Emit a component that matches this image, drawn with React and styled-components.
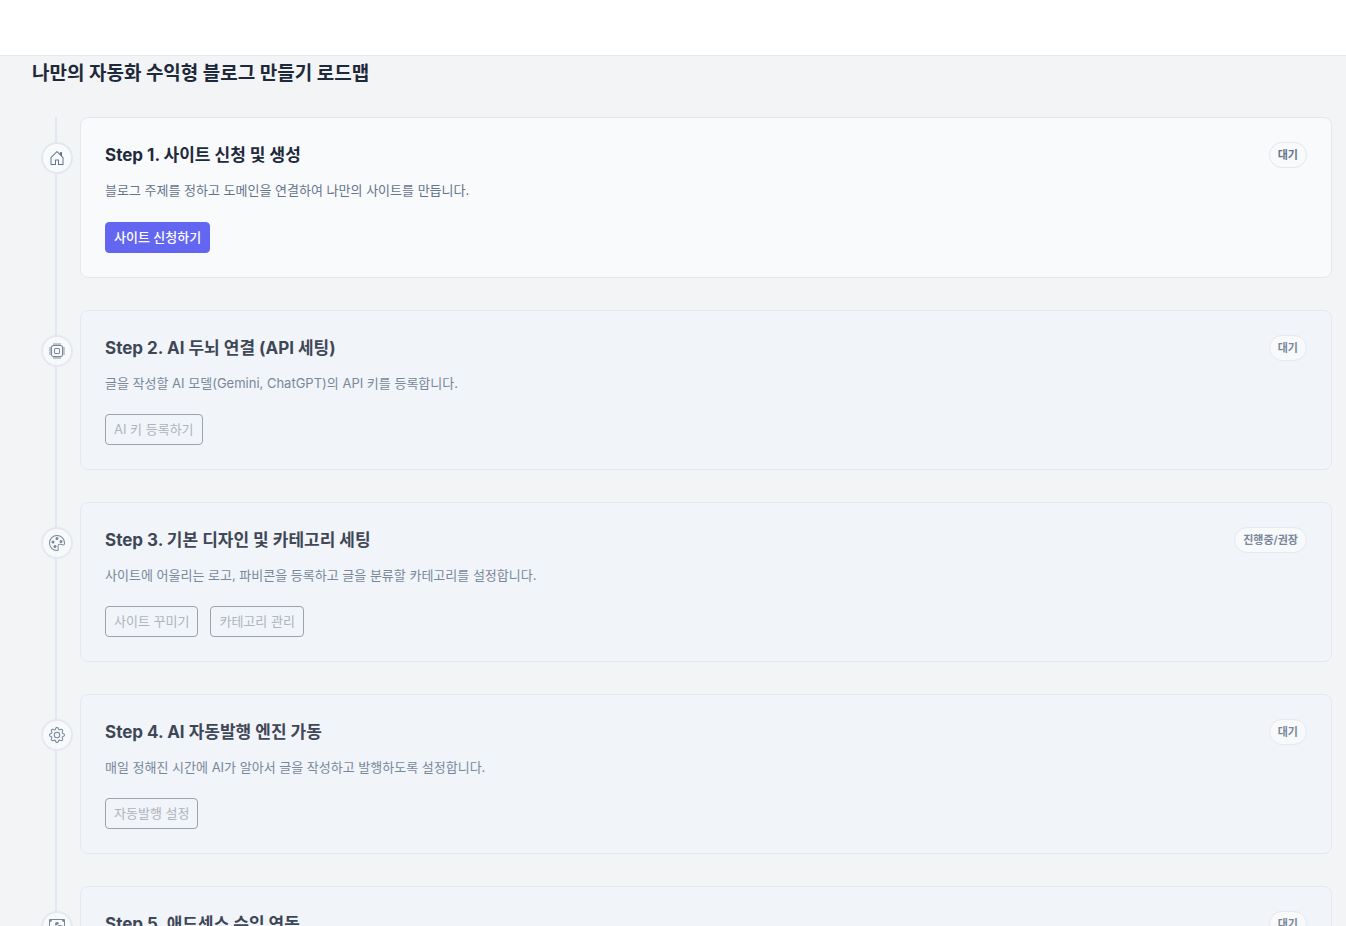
import React from 'react'
import { styled, createGlobalStyle } from 'styled-components'
import { BsHouseDoor, BsCpu, BsPalette, BsGear, BsCashCoin } from 'react-icons/bs'

const GlobalStyle = createGlobalStyle`
  * {
    box-sizing: border-box;
  }
  body {
    margin: 0;
    background: #f3f4f6;
    color: #1e293b;
    font-family: Inter, "Noto Sans CJK KR", sans-serif;
  }
`
const Page = styled.div`
  display: flex;
  flex-direction: column;
  height: 100vh;
`
const TopBar = styled.header`
  flex: none;
  height: 56px;
  background: #fff;
  border-bottom: 1px solid #e2e8f0;
`
const Content = styled.main`
  flex: 1;
  overflow-y: auto;
  scrollbar-width: none;
  padding: 3px 14px 32px 32px;
`
const PageTitle = styled.h1`
  margin: 0 0 28px;
  font-size: 19px;
  line-height: 30px;
  font-weight: 700;
`
const Timeline = styled.ol`
  display: flex;
  flex-direction: column;
  gap: 32px;
  margin: 0 0 0 23px;
  padding: 0;
  border-left: 2px solid #e2e8f0;
  list-style: none;
`
const Step = styled.li`
  display: flex;
  align-items: flex-start;
  gap: 7px;
  margin-left: -16px;
  opacity: ${({ $locked }) => ($locked ? 0.85 : 1)};
`
const Marker = styled.span`
  flex: none;
  display: flex;
  align-items: center;
  justify-content: center;
  width: 32px;
  height: 32px;
  margin-top: 25px;
  border: 2px solid #e2e8f0;
  border-radius: 50%;
  background: #f8fafc;
  color: #64748b;
  font-size: 16px;
`
const Card = styled.section`
  flex: 1;
  min-width: 0;
  padding: 24px;
  border: 1px solid #e2e8f0;
  border-radius: 8px;
  background: ${({ $locked }) => ($locked ? '#f1f5f9' : '#f8fafc')};
`
const CardHead = styled.div`
  display: flex;
  align-items: center;
  justify-content: space-between;
  gap: 16px;
`
const StepTitle = styled.h2`
  margin: 0;
  font-size: 17px;
  line-height: 26px;
  font-weight: 700;
`
const Badge = styled.span`
  flex: none;
  padding: 0 8px;
  border: 1px solid #e2e8f0;
  border-radius: 13px;
  background: #f8fafc;
  color: #64748b;
  font-size: 11px;
  line-height: 24px;
  font-weight: 600;
`
const Description = styled.p`
  margin: 11px 0 ${({ $locked }) => ($locked ? '20px' : '21px')};
  color: #64748b;
  font-size: 13px;
  line-height: 22px;
`
const Actions = styled.div`
  display: flex;
  flex-wrap: wrap;
  gap: 12px;
`
const ActionButton = styled.button`
  height: 31px;
  padding: 0 8px 2px;
  border: 1px solid #6366f1;
  border-radius: 4px;
  background: #6366f1;
  color: #fff;
  font-family: inherit;
  font-size: 13px;
  font-weight: 500;
  cursor: pointer;

  &:disabled {
    border-color: #8f959c;
    background: transparent;
    color: #a3a9b3;
    font-weight: 400;
    cursor: default;
  }
`

const steps = [
  {
    icon: BsHouseDoor,
    title: 'Step 1. 사이트 신청 및 생성',
    text: '블로그 주제를 정하고 도메인을 연결하여 나만의 사이트를 만듭니다.',
    status: '대기',
    actions: ['사이트 신청하기'],
    locked: false,
  },
  {
    icon: BsCpu,
    title: 'Step 2. AI 두뇌 연결 (API 세팅)',
    text: '글을 작성할 AI 모델(Gemini, ChatGPT)의 API 키를 등록합니다.',
    status: '대기',
    actions: ['AI 키 등록하기'],
    locked: true,
  },
  {
    icon: BsPalette,
    title: 'Step 3. 기본 디자인 및 카테고리 세팅',
    text: '사이트에 어울리는 로고, 파비콘을 등록하고 글을 분류할 카테고리를 설정합니다.',
    status: '진행중/권장',
    actions: ['사이트 꾸미기', '카테고리 관리'],
    locked: true,
  },
  {
    icon: BsGear,
    title: 'Step 4. AI 자동발행 엔진 가동',
    text: '매일 정해진 시간에 AI가 알아서 글을 작성하고 발행하도록 설정합니다.',
    status: '대기',
    actions: ['자동발행 설정'],
    locked: true,
  },
  {
    icon: BsCashCoin,
    title: 'Step 5. 애드센스 수익 연동',
    text: '애드센스 코드를 등록하고 광고 수익을 연동합니다.',
    status: '대기',
    actions: ['애드센스 연동'],
    locked: true,
  },
]

const App = () => {
  return (
    <Page>
      <GlobalStyle />
      <TopBar />
      <Content>
        <PageTitle>나만의 자동화 수익형 블로그 만들기 로드맵</PageTitle>
        <Timeline>
          {steps.map(({ icon: Icon, title, text, status, actions, locked }) => (
            <Step key={title} $locked={locked}>
              <Marker>
                <Icon aria-hidden="true" />
              </Marker>
              <Card $locked={locked}>
                <CardHead>
                  <StepTitle>{title}</StepTitle>
                  <Badge>{status}</Badge>
                </CardHead>
                <Description $locked={locked}>{text}</Description>
                <Actions>
                  {actions.map((label) => (
                    <ActionButton key={label} type="button" disabled={locked}>
                      {label}
                    </ActionButton>
                  ))}
                </Actions>
              </Card>
            </Step>
          ))}
        </Timeline>
      </Content>
    </Page>
  )
}

export default App
